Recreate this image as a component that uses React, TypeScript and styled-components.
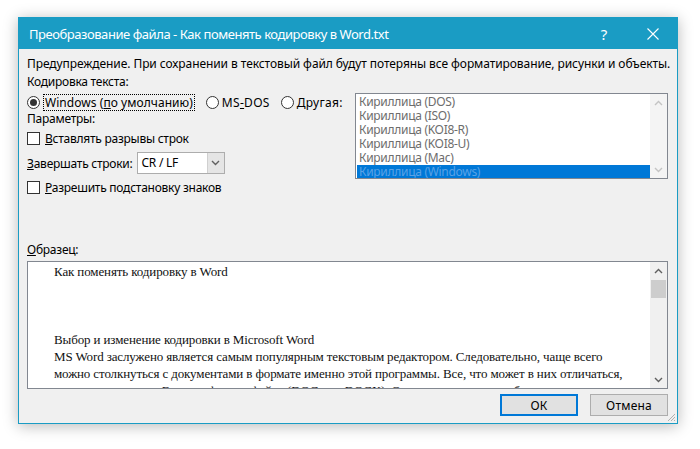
import React from "react";
import styled, { createGlobalStyle } from "styled-components";

const Global = createGlobalStyle`
  html, body { margin: 0; padding: 0; background: #ffffff; }
  body { font-family: "Noto Sans", "Liberation Sans", sans-serif; }
  * { box-sizing: border-box; }
`;

const Page = styled.div`
  width: 700px;
  height: 449px;
  padding: 17px 22px 0 18px;
  background: #ffffff;
`;

const Dialog = styled.div`
  width: 660px;
  height: 407px;
  border: 1px solid #1a9cc4;
  background: #f0f0f0;
  display: flex;
  flex-direction: column;
  box-shadow: 0 2px 14px rgba(0, 0, 0, 0.28);
  position: relative;
`;

const TitleBar = styled.div`
  height: 31px;
  background: #1a9cc4;
  color: #ffffff;
  display: flex;
  align-items: center;
  padding-left: 10px;
  flex-shrink: 0;
`;

const TitleText = styled.div`
  flex: 1;
  font-size: 13px;
  letter-spacing: -0.45px;
  white-space: nowrap;
`;

const TitleButton = styled.div<{ $w: number }>`
  width: ${(p) => p.$w}px;
  height: 31px;
  display: flex;
  align-items: center;
  justify-content: center;
  font-size: 15px;
  color: #ffffff;
`;

const Body = styled.div`
  flex: 1;
  display: flex;
  flex-direction: column;
  padding: 7px 9px 0 8px;
  font-size: 12px;
  color: #000000;
`;

const Line = styled.div<{ $ls?: number }>`
  height: 18px;
  line-height: 16px;
  white-space: nowrap;
  letter-spacing: ${(p) => p.$ls ?? -0.25}px;
`;

const Upper = styled.div`
  display: grid;
  grid-template-columns: minmax(0, 1fr) 313px;
  column-gap: 8px;
  margin-top: 1px;
`;

const LeftCol = styled.div`
  display: flex;
  flex-direction: column;
  min-width: 0;
`;

const RadioRow = styled.div`
  display: flex;
  align-items: center;
  height: 18px;
`;

const RadioItem = styled.label<{ $ml?: number; $ls?: number }>`
  display: flex;
  align-items: center;
  margin-left: ${(p) => p.$ml ?? 0}px;
  white-space: nowrap;
  letter-spacing: ${(p) => p.$ls ?? 0}px;
`;

const RadioCircle = styled.span<{ $checked?: boolean }>`
  width: 13px;
  height: 13px;
  border-radius: 50%;
  border: 1px solid #333333;
  background: #ffffff;
  display: inline-flex;
  align-items: center;
  justify-content: center;
  margin-right: 3px;
  flex-shrink: 0;
  &::after {
    content: "";
    width: 7px;
    height: 7px;
    border-radius: 50%;
    background: ${(p) => (p.$checked ? "#333333" : "transparent")};
  }
`;

const Focus = styled.span`
  border: 1px dotted #000000;
  padding: 0 1px;
  height: 17px;
  line-height: 15px;
`;

const CheckRow = styled.label<{ $mt?: number }>`
  display: flex;
  align-items: center;
  height: 18px;
  margin-top: ${(p) => p.$mt ?? 0}px;
  white-space: nowrap;
  letter-spacing: -0.25px;
`;

const CheckBox = styled.span`
  width: 13px;
  height: 13px;
  border: 1px solid #333333;
  background: #ffffff;
  margin-right: 5px;
  flex-shrink: 0;
`;

const ComboRow = styled.div`
  display: flex;
  align-items: center;
  height: 22px;
  margin-top: 5px;
  letter-spacing: -0.25px;
  white-space: nowrap;
`;

const Combo = styled.div`
  width: 88px;
  height: 22px;
  margin-left: 4px;
  border: 1px solid #adadad;
  background: #ffffff;
  display: flex;
  align-items: stretch;
`;

const ComboValue = styled.div`
  flex: 1;
  padding-left: 4px;
  line-height: 20px;
  font-size: 12px;
`;

const ComboButton = styled.div`
  width: 17px;
  background: #e5e5e5;
  border-left: 1px solid #d0d0d0;
  display: flex;
  align-items: center;
  justify-content: center;
`;

const ListBox = styled.div`
  height: 86px;
  border: 1px solid #828790;
  background: #ffffff;
  display: flex;
  overflow: hidden;
`;

const ListItems = styled.div`
  flex: 1;
  padding: 1px 0 0 1px;
  display: flex;
  flex-direction: column;
`;

const ListItem = styled.div<{ $selected?: boolean }>`
  height: 14px;
  line-height: 14px;
  padding-left: 2px;
  font-size: 12px;
  letter-spacing: -0.3px;
  white-space: nowrap;
  color: ${(p) => (p.$selected ? "#5aa2e6" : "#6d6d6d")};
  background: ${(p) => (p.$selected ? "#0078d7" : "transparent")};
`;

const ScrollBar = styled.div<{ $w: number; $bg: string }>`
  width: ${(p) => p.$w}px;
  background: ${(p) => p.$bg};
  display: flex;
  flex-direction: column;
  align-items: center;
  justify-content: space-between;
  flex-shrink: 0;
`;

const ScrollArrow = styled.div`
  height: 17px;
  width: 100%;
  display: flex;
  align-items: center;
  justify-content: center;
`;

const ScrollTrack = styled.div`
  flex: 1;
  width: 100%;
  display: flex;
  flex-direction: column;
  align-items: center;
`;

const Thumb = styled.div`
  width: 15px;
  height: 18px;
  margin-top: 1px;
  background: #cdcdcd;
`;

const SampleLabel = styled.div`
  margin-top: 46px;
  height: 19px;
  line-height: 16px;
  letter-spacing: -0.25px;
`;

const Preview = styled.div`
  height: 128px;
  border: 1px solid #828790;
  background: #ffffff;
  display: flex;
  overflow: hidden;
`;

const PreviewText = styled.div`
  flex: 1;
  padding: 1px 0 0 26px;
  font-family: "Liberation Serif", "Times New Roman", serif;
  font-size: 13px;
  letter-spacing: -0.12px;
  color: #111111;
  overflow: hidden;
`;

const PLine = styled.div`
  height: 17px;
  line-height: 17px;
  white-space: nowrap;
`;

const Buttons = styled.div`
  display: flex;
  justify-content: flex-end;
  gap: 12px;
  margin-top: 5px;
`;

const Button = styled.div<{ $default?: boolean }>`
  width: 78px;
  height: 22px;
  background: #e1e1e1;
  border: ${(p) => (p.$default ? "2px solid #0078d7" : "1px solid #adadad")};
  display: flex;
  align-items: center;
  justify-content: center;
  font-size: 12px;
  letter-spacing: 0.2px;
`;

const Grip = styled.svg`
  position: absolute;
  right: 1px;
  bottom: 1px;
`;

const Chevron = ({ up, color }: { up?: boolean; color: string }) => (
  <svg width="9" height="6" viewBox="0 0 9 6">
    <path
      d={up ? "M1 5 L4.5 1.5 L8 5" : "M1 1 L4.5 4.5 L8 1"}
      fill="none"
      stroke={color}
      strokeWidth="1.4"
    />
  </svg>
);

export default function App() {
  return (
    <>
      <Global />
      <Page>
        <Dialog>
          <TitleBar>
            <TitleText>Преобразование файла - Как поменять кодировку в Word.txt</TitleText>
            <TitleButton $w={50}>?</TitleButton>
            <TitleButton $w={48}>
              <svg width="12" height="12" viewBox="0 0 12 12">
                <path d="M0.5 0.5 L11.5 11.5 M11.5 0.5 L0.5 11.5" stroke="#ffffff" strokeWidth="1.1" />
              </svg>
            </TitleButton>
          </TitleBar>
          <Body>
            <Line $ls={-0.08}>
              Предупреждение. При сохранении в текстовый файл будут потеряны все форматирование, рисунки и объекты.
            </Line>
            <Line>Кодировка текста:</Line>
            <Upper>
              <LeftCol>
                <RadioRow>
                  <RadioItem $ls={0.05}>
                    <RadioCircle $checked />
                    <Focus>
                      Windows (<u>п</u>о умолчанию)
                    </Focus>
                  </RadioItem>
                  <RadioItem $ml={11} $ls={0.3}>
                    <RadioCircle />
                    <span>
                      MS<u>-</u>DOS
                    </span>
                  </RadioItem>
                  <RadioItem $ml={11} $ls={0.3}>
                    <RadioCircle />
                    <span>
                      <u>Д</u>ругая:
                    </span>
                  </RadioItem>
                </RadioRow>
                <Line>Параметры:</Line>
                <CheckRow>
                  <CheckBox />
                  <span>
                    <u>В</u>ставлять разрывы строк
                  </span>
                </CheckRow>
                <ComboRow>
                  <span>
                    <u>З</u>авершать строки:
                  </span>
                  <Combo>
                    <ComboValue>CR / LF</ComboValue>
                    <ComboButton>
                      <Chevron color="#606060" />
                    </ComboButton>
                  </Combo>
                </ComboRow>
                <CheckRow $mt={4}>
                  <CheckBox />
                  <span>
                    <u>Р</u>азрешить подстановку знаков
                  </span>
                </CheckRow>
              </LeftCol>
              <ListBox>
                <ListItems>
                  <ListItem>Кириллица (DOS)</ListItem>
                  <ListItem>Кириллица (ISO)</ListItem>
                  <ListItem>Кириллица (KOI8-R)</ListItem>
                  <ListItem>Кириллица (KOI8-U)</ListItem>
                  <ListItem>Кириллица (Mac)</ListItem>
                  <ListItem $selected>Кириллица (Windows)</ListItem>
                </ListItems>
                <ScrollBar $w={17} $bg="#f4f4f4">
                  <ScrollArrow>
                    <Chevron up color="#c4c4c4" />
                  </ScrollArrow>
                  <ScrollArrow>
                    <Chevron color="#c4c4c4" />
                  </ScrollArrow>
                </ScrollBar>
              </ListBox>
            </Upper>
            <SampleLabel>
              <u>О</u>бразец:
            </SampleLabel>
            <Preview>
              <PreviewText>
                <PLine>Как поменять кодировку в Word</PLine>
                <PLine />
                <PLine />
                <PLine />
                <PLine>Выбор и изменение кодировки в Microsoft Word</PLine>
                <PLine>
                  MS Word заслужено является самым популярным текстовым редактором. Следовательно, чаще всего
                </PLine>
                <PLine>
                  можно столкнуться с документами в формате именно этой программы. Все, что может в них отличаться,
                </PLine>
                <PLine>— это лишь версия Ворда и формат файла (DOC или DOCX). Однако, несмотря на общность,</PLine>
              </PreviewText>
              <ScrollBar $w={17} $bg="#f0f0f0">
                <ScrollTrack>
                  <ScrollArrow>
                    <Chevron up color="#606060" />
                  </ScrollArrow>
                  <Thumb />
                </ScrollTrack>
                <ScrollArrow>
                  <Chevron color="#606060" />
                </ScrollArrow>
              </ScrollBar>
            </Preview>
            <Buttons>
              <Button $default>ОК</Button>
              <Button>Отмена</Button>
            </Buttons>
          </Body>
          <Grip width="10" height="10" viewBox="0 0 10 10">
            <path d="M9 2 L2 9 M9 5 L5 9 M9 8 L8 9" stroke="#b0b0b0" strokeWidth="1" />
          </Grip>
        </Dialog>
      </Page>
    </>
  );
}
